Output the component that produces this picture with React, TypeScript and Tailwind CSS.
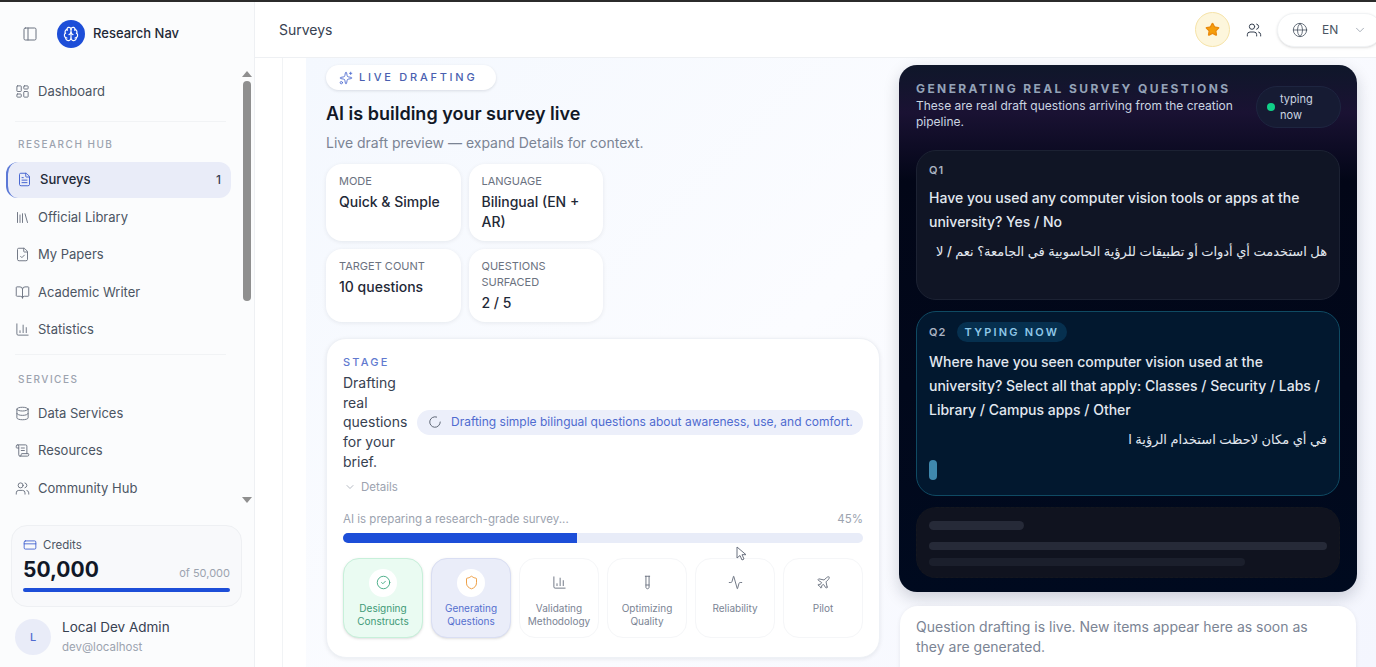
import {
  Activity,
  BookOpen,
  Brain,
  ChartColumn,
  ChevronDown,
  CircleCheck,
  CreditCard,
  Database,
  FileCheck,
  FileText,
  Globe,
  LayoutDashboard,
  Library,
  LoaderCircle,
  PanelLeft,
  Plane,
  ScrollText,
  Shield,
  Sparkles,
  Star,
  TestTube,
  Users,
} from 'lucide-react'

const hub = [
  { label: 'Official Library', icon: Library },
  { label: 'My Papers', icon: FileCheck },
  { label: 'Academic Writer', icon: BookOpen },
  { label: 'Statistics', icon: ChartColumn },
]

const services = [
  { label: 'Data Services', icon: Database },
  { label: 'Resources', icon: ScrollText },
  { label: 'Community Hub', icon: Users },
]

const stages = [
  { label: 'Validating Methodology', icon: ChartColumn },
  { label: 'Optimizing Quality', icon: TestTube },
  { label: 'Reliability', icon: Activity },
  { label: 'Pilot', icon: Plane },
]

function NavItem({ label, icon: Icon }: { label: string; icon: typeof Library }) {
  return (
    <div className="flex h-[37.5px] items-center gap-2 pl-[15px] text-[13px] text-[#4b5563]">
      <Icon size={15} strokeWidth={1.5} className="text-[#6b7280]" />
      <span>{label}</span>
    </div>
  )
}

function Sidebar() {
  return (
    <aside className="flex w-[255px] shrink-0 flex-col border-r border-[#eef0f3] bg-[#fbfcfd]">
      {/* Logo */}
      <div className="flex h-[64px] shrink-0 items-center pl-[22px]">
        <PanelLeft size={16} strokeWidth={1.5} className="text-[#6b7280]" />
        <div className="ml-[19px] flex h-7 w-7 items-center justify-center rounded-full bg-[#1d4ed8]">
          <Brain size={16} strokeWidth={1.75} className="text-white" />
        </div>
        <span className="ml-2 text-[13px] font-medium text-[#1f2937]">Research Nav</span>
      </div>

      {/* Nav */}
      <div className="flex h-[447px] shrink-0">
        <nav className="w-[241px] shrink-0">
          <div className="mt-[7px]">
            <NavItem label="Dashboard" icon={LayoutDashboard} />
          </div>
          <div className="mx-[15px] mt-[10px] border-t border-[#f1f3f5]" />
          <div className="mt-[14px] pl-[18px] text-[10px] font-medium leading-[16px] tracking-[0.15em] text-[#9ca3af]">
            RESEARCH HUB
          </div>
          <div className="ml-[6px] mt-[10px] flex h-9 w-[225px] items-center rounded-xl border-l-2 border-[#5b78d6] bg-[#e9ecf8] pl-[9px] pr-[10px] text-[13px] font-medium text-[#1f2937]">
            <FileText size={15} strokeWidth={1.5} className="text-[#3f5fcf]" />
            <span className="ml-2 flex-1">Surveys</span>
            <span className="text-[12px] text-[#374151]">1</span>
          </div>
          <div className="mt-px">
            {hub.map((item) => (
              <NavItem key={item.label} {...item} />
            ))}
          </div>
          <div className="mx-[15px] mt-[5px] border-t border-[#f1f3f5]" />
          <div className="mt-[16px] pl-[18px] text-[10px] font-medium leading-[16px] tracking-[0.15em] text-[#9ca3af]">
            SERVICES
          </div>
          <div className="mt-[8px]">
            {services.map((item) => (
              <NavItem key={item.label} {...item} />
            ))}
          </div>
        </nav>
        {/* Scrollbar */}
        <div className="flex w-[12px] flex-col items-center pt-[5px]">
          <div className="h-0 w-0 border-x-[5px] border-b-[6px] border-x-transparent border-b-[#8f8f8f]" />
          <div className="mt-[4px] h-[220px] w-[8px] rounded-full bg-[#8f8f8f]" />
          <div className="mt-[196px] h-0 w-0 border-x-[5px] border-t-[6px] border-x-transparent border-t-[#8f8f8f]" />
        </div>
      </div>

      {/* Credits */}
      <div className="ml-[11px] mt-[12px] h-[82px] w-[231px] shrink-0 rounded-2xl border border-[#eef0f3] bg-[#f8f9fb] px-[11px] pt-[11px]">
        <div className="flex items-center gap-[6px] text-[11.5px] leading-[16px] text-[#4b5563]">
          <CreditCard size={14} strokeWidth={1.5} className="text-[#3f5fcf]" />
          Credits
        </div>
        <div className="mt-[2px] flex items-baseline justify-between">
          <span className="text-[21px] font-bold leading-[30px] text-[#111827]">50,000</span>
          <span className="text-[11px] text-[#9ca3af]">of 50,000</span>
        </div>
        <div className="mt-[3px] h-1 rounded-full bg-[#1d4ed8]" />
      </div>

      {/* User */}
      <div className="ml-[15px] mt-[10px] flex items-center gap-[11px]">
        <div className="flex h-9 w-9 items-center justify-center rounded-full bg-[#e9ecf8] text-[11px] font-medium text-[#4f6bd0]">
          L
        </div>
        <div>
          <div className="text-[13.5px] leading-[20px] text-[#374151]">Local Dev Admin</div>
          <div className="text-[11.5px] leading-[20px] text-[#9ca3af]">dev@localhost</div>
        </div>
      </div>
    </aside>
  )
}

function Header() {
  return (
    <header className="flex h-[56px] shrink-0 items-center border-b border-[#eef0f3] bg-white pl-[24px]">
      <span className="text-[14px] text-[#374151]">Surveys</span>
      <div className="ml-auto flex items-center">
        <div className="flex h-[35px] w-[35px] items-center justify-center rounded-full border border-[#f6e3a8] bg-[#fdf6dc]">
          <Star size={15} className="fill-[#f59e0b] text-[#ea8a0c]" />
        </div>
        <Users size={16} strokeWidth={1.5} className="ml-[16px] text-[#374151]" />
        <div className="ml-[15px] mr-[-6px] flex h-[34px] w-[105px] items-center rounded-full border border-[#f1f3f5] bg-white pl-[14px] shadow-sm">
          <Globe size={16} strokeWidth={1.25} className="text-[#4b5563]" />
          <span className="ml-[14px] text-[12px] text-[#4b5563]">EN</span>
          <ChevronDown size={14} strokeWidth={1.5} className="ml-[15px] text-[#9ca3af]" />
        </div>
      </div>
    </header>
  )
}

function InfoCard({ label, value, className }: { label: string; value: string; className: string }) {
  return (
    <div className={`rounded-2xl bg-white px-[13px] pt-[9px] shadow-[0_1px_4px_rgba(15,23,42,0.08)] ${className}`}>
      <div className="text-[11px] leading-[16px] text-[#6b7280]">{label}</div>
      <div className="mt-[3px] text-[14px] font-medium leading-[20px] text-[#1f2937]">{value}</div>
    </div>
  )
}

function StageCard() {
  return (
    <div className="relative mt-[16px] h-[320px] rounded-[20px] border border-[#eef1f6] bg-white pl-[16px] pr-[16px] pt-[15px] shadow-[0_1px_4px_rgba(15,23,42,0.08)]">
      <div className="text-[11px] font-medium leading-[16px] tracking-[0.2em] text-[#6179cf]">STAGE</div>
      <div className="mt-[3px] flex items-center gap-[9px]">
        <div className="w-[65px] shrink-0 text-[14px] leading-[19.7px] text-[#374151]">
          Drafting real questions for your brief.
        </div>
        <div className="flex h-[25px] flex-1 items-center rounded-full bg-[#eceffa] pl-[11px] text-[12px] text-[#4f6bd0]">
          <LoaderCircle size={14} strokeWidth={1.5} className="text-[#4b5563]" />
          <span className="ml-[9px]">Drafting simple bilingual questions about awareness, use, and comfort.</span>
        </div>
      </div>
      <div className="ml-px mt-[6px] flex items-center gap-[5px] text-[11.5px] leading-[18px] text-[#9ca3af]">
        <ChevronDown size={12} strokeWidth={1.5} />
        Details
      </div>
      <div className="mt-[14px] flex justify-between text-[11.5px] leading-[18px] text-[#9ca3af]">
        <span>AI is preparing a research-grade survey...</span>
        <span>45%</span>
      </div>
      <div className="mt-[5px] h-[10px] overflow-hidden rounded-full bg-[#e8ecf8]">
        <div className="h-full w-[45%] bg-[#1d4ed8]" />
      </div>
      <div className="mt-[15px] grid h-[80px] grid-cols-6 gap-2 text-center text-[10px] leading-[13px]">
        <div className="rounded-2xl border border-[#c7f0da] bg-[#eafbf2] pt-[10px] text-[#3f9a77] shadow-sm">
          <div className="mx-auto flex h-[28px] w-[28px] items-center justify-center rounded-full bg-white">
            <CircleCheck size={15} strokeWidth={1.5} className="text-[#45ab84]" />
          </div>
          <div className="mt-[5px]">Designing Constructs</div>
        </div>
        <div className="rounded-2xl border border-[#d9def3] bg-[#eaedf9] pt-[10px] text-[#5570cf] shadow-sm">
          <div className="mx-auto flex h-[28px] w-[28px] items-center justify-center rounded-full bg-white">
            <Shield size={15} strokeWidth={1.5} className="text-[#ec9a3c]" />
          </div>
          <div className="mt-[5px]">Generating Questions</div>
        </div>
        {stages.map(({ label, icon: Icon }) => (
          <div key={label} className="rounded-2xl border border-[#f5f6f8] bg-white pt-[10px] text-[#7b8494]">
            <div className="mx-auto flex h-[28px] w-[28px] items-center justify-center rounded-full bg-white">
              <Icon size={15} strokeWidth={1.5} className="text-[#6b7280]" />
            </div>
            <div className="mt-[5px]">{label}</div>
          </div>
        ))}
      </div>
      {/* Mouse cursor */}
      <svg
        className="absolute left-[409px] top-[207px]"
        width="12"
        height="16"
        viewBox="0 0 12 16"
        fill="#ffffff"
        stroke="#6b7280"
        strokeWidth="1"
      >
        <path d="M1 1v11l3-2.5 2 4.5 2-1-2-4.300h4z" />
      </svg>
    </div>
  )
}

function DraftPanel() {
  return (
    <div className="w-[458px] shrink-0">
      <div className="h-[527px] rounded-[18px] bg-[linear-gradient(180deg,#0f172a_0%,#1a1233_9%,#020617_22%,#000a1f_100%)] px-[17px] pt-[16px] shadow-[0_6px_16px_rgba(15,23,42,0.18)]">
        <div className="flex items-start justify-between">
          <div className="w-[322px]">
            <div className="text-[12px] font-bold leading-[16px] tracking-[0.2em] text-[#94a3b8]">
              GENERATING REAL SURVEY QUESTIONS
            </div>
            <div className="mt-[1px] text-[12px] leading-[16px] text-[#cbd5e1]">
              These are real draft questions arriving from the creation pipeline.
            </div>
          </div>
          <div className="mr-[-1px] mt-[5px] flex h-[42px] w-[85px] items-center gap-[5px] rounded-full border border-[#1e2540] bg-[#161b33] pl-[10px] text-[11px] leading-[16px] text-[#cbd5e1]">
            <span className="h-2 w-2 shrink-0 rounded-full bg-[#10d088]" />
            <span className="w-[40px]">typing now</span>
          </div>
        </div>

        {/* Q1 */}
        <div className="mt-[20px] h-[150px] rounded-[20px] border border-[#1c2233] bg-[#101525] px-[12px] pt-[10px]">
          <div className="text-[11px] font-semibold leading-[18px] tracking-[0.1em] text-[#aab3c2]">Q1</div>
          <div className="mt-[7px] text-[14px] font-medium leading-[24px] text-[#e2e8f0]">
            Have you used any computer vision tools or apps at the university? Yes / No
          </div>
          <div dir="rtl" className="mt-[6px] text-[13px] font-medium leading-[23px] text-[#e2e8f0]">
            هل استخدمت أي أدوات أو تطبيقات للرؤية الحاسوبية في الجامعة؟ نعم / لا
          </div>
        </div>

        {/* Q2 */}
        <div className="mt-[11px] h-[185px] rounded-[20px] border border-[#0f4a63] bg-[#02182f] px-[12px] pt-[10px]">
          <div className="flex items-center gap-[10px]">
            <span className="text-[11px] font-semibold tracking-[0.1em] text-[#aab3c2]">Q2</span>
            <span className="flex h-[20px] items-center rounded-full bg-[#06304f] px-2 text-[11px] font-semibold tracking-[0.2em] text-[#8fc8e8]">
              TYPING NOW
            </span>
          </div>
          <div className="mt-[8px] text-[14px] font-medium leading-[24px] text-[#e2e8f0]">
            Where have you seen computer vision used at the university? Select all that apply: Classes / Security / Labs / Library / Campus apps / Other
          </div>
          <div dir="rtl" className="mt-[6px] text-[13px] font-medium leading-[23px] text-[#e2e8f0]">
            في أي مكان لاحظت استخدام الرؤية ا
          </div>
          <div className="mt-[9px] h-[20px] w-[8px] rounded-full bg-[#3f88ae]" />
        </div>

        {/* Skeleton */}
        <div className="mt-[11px] h-[71px] rounded-[20px] border border-dashed border-[#14171f] bg-[#10131f] px-[12px] pt-[13px]">
          <div className="h-[9px] w-[95px] rounded-full bg-[#262a38]" />
          <div className="mt-[12px] h-[8px] rounded-full bg-[#262a38]" />
          <div className="mt-[8px] h-[8px] w-[316px] rounded-full bg-[#1b1f2c]" />
        </div>
      </div>

      <div className="mx-px mt-[14px] h-[80px] rounded-[18px] bg-white px-[16px] pt-[11px] text-[14px] leading-[20px] text-[#7b8494] shadow-[0_1px_4px_rgba(15,23,42,0.08)]">
        Question drafting is live. New items appear here as soon as they are generated.
      </div>
    </div>
  )
}

export default function App() {
  return (
    <div className="flex h-[667px] w-[1376px] flex-col overflow-hidden bg-white [font-family:Inter,'DejaVu_Sans',sans-serif]">
      <div className="h-[2px] shrink-0 bg-[#2b2b2b]" />
      <div className="flex min-h-0 flex-1">
        <Sidebar />
        <div className="flex min-w-0 flex-1 flex-col">
          <Header />
          {/* Content */}
          <main className="min-h-0 flex-1 overflow-hidden pl-[27px]">
            <div className="h-full border-l border-[#f1f3f5] bg-white pl-[23px]">
              <div className="flex h-full gap-[19px] bg-[linear-gradient(135deg,#f4f8fe_0%,#fbfcff_45%,#f4f6fe_100%)] pl-[20px] pr-[18px] pt-[7px]">
                <section className="w-[554px] shrink-0">
                  <div className="flex h-[25px] w-[170px] items-center gap-[6px] rounded-full bg-white pl-[13px] text-[11px] font-medium tracking-[0.25em] text-[#4a5fb0] shadow-[0_1px_3px_rgba(15,23,42,0.12)]">
                    <Sparkles size={14} strokeWidth={1.5} className="text-[#4f6bd0]" />
                    LIVE DRAFTING
                  </div>
                  <h1 className="mt-[10px] text-[18px] font-semibold leading-[28px] text-[#111827]">
                    AI is building your survey live
                  </h1>
                  <p className="mt-[3px] text-[14px] leading-[24px] text-[#7b8494]">
                    Live draft preview — expand Details for context.
                  </p>
                  <div className="mt-[9px] grid w-[277px] grid-cols-2 gap-2">
                    <InfoCard label="MODE" value="Quick & Simple" className="h-[77px]" />
                    <InfoCard label="LANGUAGE" value="Bilingual (EN + AR)" className="h-[77px]" />
                    <InfoCard label="TARGET COUNT" value="10 questions" className="h-[73px]" />
                    <InfoCard label="QUESTIONS SURFACED" value="2 / 5" className="h-[73px]" />
                  </div>
                  <StageCard />
                </section>
                <DraftPanel />
              </div>
            </div>
          </main>
        </div>
      </div>
    </div>
  )
}
